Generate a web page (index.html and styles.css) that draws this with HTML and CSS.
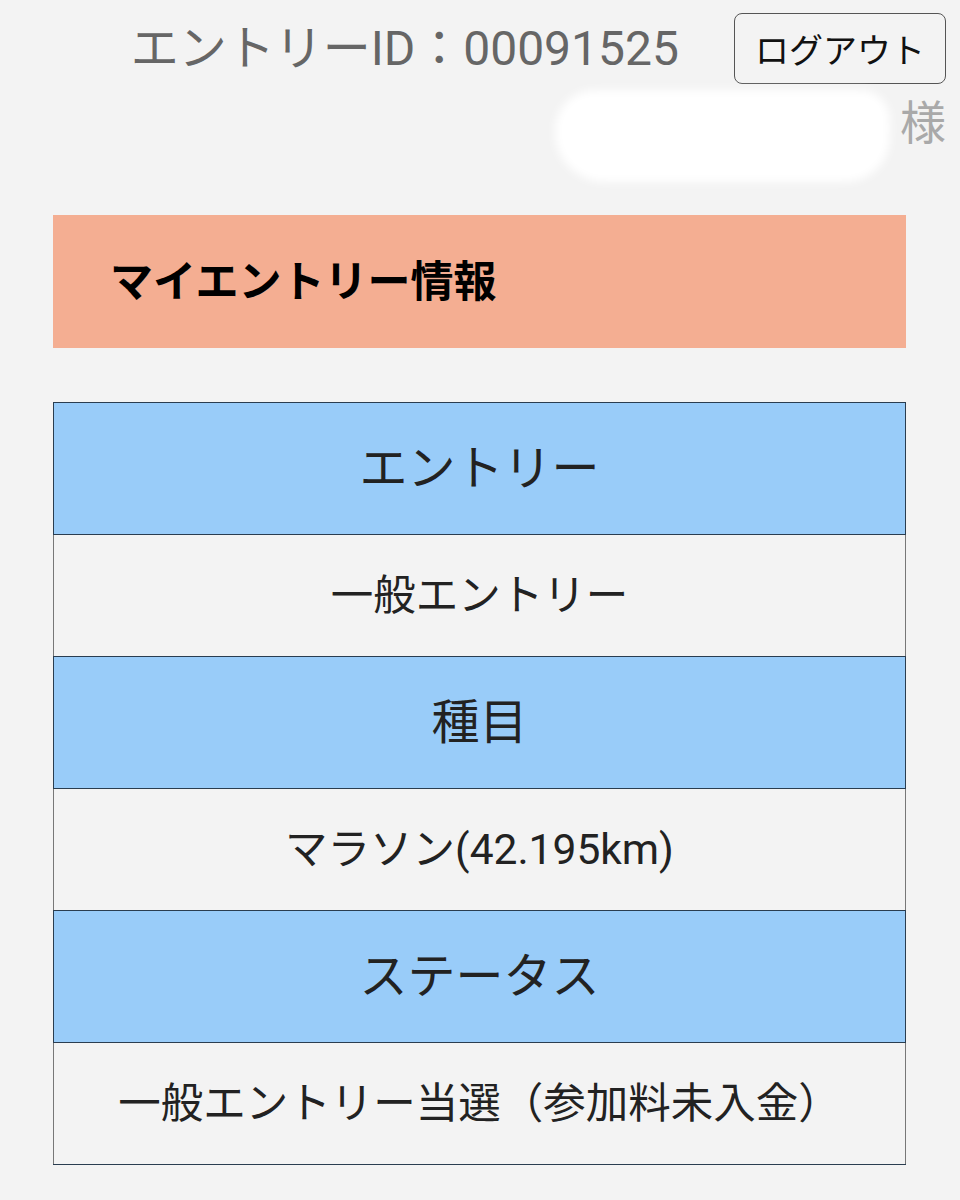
FILE: index.html
```html
<!DOCTYPE html>
<html lang="ja">
<head>
<meta charset="utf-8">
<title>マイエントリー情報</title>
<link rel="stylesheet" href="styles.css">
</head>
<body>
<header class="top">
  <div class="id-row">
    <span class="entry-id">エントリーID：00091525</span>
    <button class="logout" type="button">ログアウト</button>
  </div>
  <div class="name-row">
    <span class="name-mask"></span>
    <span class="honorific">様</span>
  </div>
</header>
<main class="content">
  <h1 class="section-title">マイエントリー情報</h1>
  <table class="entry-table">
    <tr><th>エントリー</th></tr>
    <tr><td>一般エントリー</td></tr>
    <tr><th>種目</th></tr>
    <tr><td>マラソン(42.195km)</td></tr>
    <tr><th>ステータス</th></tr>
    <tr><td>一般エントリー当選（参加料未入金）</td></tr>
  </table>
</main>
</body>
</html>
```

FILE: styles.css
```css
html, body {
  margin: 0;
  padding: 0;
  background: #f3f3f3;
  font-family: Roboto, "Noto Sans CJK JP", sans-serif;
  color: #222;
}

.top {
  display: flex;
  flex-direction: column;
}

.id-row {
  display: flex;
  justify-content: flex-end;
  align-items: center;
  gap: 55px;
  padding: 13px 14px 0 0;
}

.entry-id {
  font-size: 48px;
  color: #666;
  line-height: 1;
}

.logout {
  box-sizing: border-box;
  width: 212px;
  height: 71px;
  padding: 0;
  background: #f3f3f3;
  border: 1.5px solid #555;
  border-radius: 8px;
  font-family: inherit;
  font-size: 34px;
  color: #111;
}

.name-row {
  display: flex;
  justify-content: flex-end;
  align-items: flex-start;
  padding-right: 14px;
}

/* blurred white patch over the account name */
.name-mask {
  width: 335px;
  height: 92px;
  margin-top: 6px;
  margin-right: 10px;
  background: #fff;
  border-radius: 40px 30px 45px 50px;
  filter: blur(5px);
}

.honorific {
  margin-top: 16px;
  font-size: 46px;
  line-height: 1;
  color: #a9a9a9;
}

.content {
  padding: 33px 54px 36px 53px;
}

.section-title {
  box-sizing: border-box;
  margin: 0;
  height: 133px;
  display: flex;
  align-items: center;
  padding: 0 0 8px 57px;
  background: #f4ae92;
  color: #000;
  font-size: 43px;
  font-weight: 700;
}

.entry-table {
  width: 100%;
  margin-top: 54px;
  border-collapse: collapse;
}

.entry-table th,
.entry-table td {
  border: 1px solid #2a3d50;
  text-align: center;
  padding: 0 0 9px;
}

.entry-table th {
  height: 122px;
  background: #99ccf9;
  font-size: 48px;
  font-weight: 400;
  color: #222;
}

.entry-table td {
  height: 112px;
  font-size: 42.5px;
  color: #222;
  border-left-color: #777;
  border-right-color: #777;
}
```
